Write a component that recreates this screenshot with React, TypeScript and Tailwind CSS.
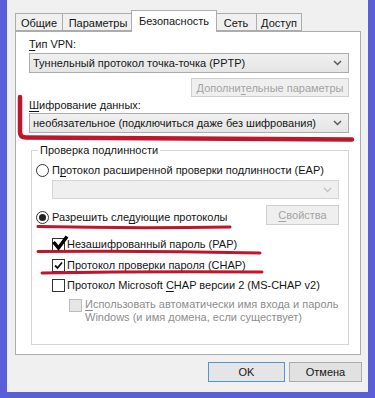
import React from "react";

const Ul = ({ children }: { children: React.ReactNode }) => (
  <span className="underline underline-offset-2 decoration-1">{children}</span>
);

const Chevron = ({ light }: { light?: boolean }) => (
  <svg width="9" height="6" viewBox="0 0 9 6">
    <path
      d="M1 1 L4.5 4.5 L8 1"
      fill="none"
      stroke={light ? "#c4c4c4" : "#5a5a5a"}
      strokeWidth="1.5"
    />
  </svg>
);

const Combo = ({ text, disabled }: { text?: string; disabled?: boolean }) => (
  <div
    className={
      disabled
        ? "flex items-center justify-between h-[19px] border border-[#d5d5d5] bg-[#efefef] pl-[3px] pr-[6px]"
        : "flex items-center justify-between h-[20px] border border-[#acacac] bg-gradient-to-b from-[#f0f0f0] to-[#e5e5e5] pl-[3px] pr-[6px]"
    }
  >
    <span>{text}</span>
    <Chevron light={disabled} />
  </div>
);

const Radio = ({ on }: { on?: boolean }) => (
  <span className="flex items-center justify-center w-[13px] h-[13px] rounded-full border border-[#333] bg-white shrink-0">
    {on && <span className="w-[7px] h-[7px] rounded-full bg-[#222]" />}
  </span>
);

const Check = ({ on, disabled }: { on?: boolean; disabled?: boolean }) => (
  <span
    className={
      disabled
        ? "flex w-[13px] h-[13px] border border-[#bcbcbc] bg-[#e6e6e6] shrink-0"
        : "flex items-center justify-center w-[13px] h-[13px] border border-[#333] bg-white shrink-0"
    }
  >
    {on && (
      <svg width="11" height="11" viewBox="0 0 11 11">
        <path d="M2 5.5 L4.5 8 L9 2.5" fill="none" stroke="#111" strokeWidth="1.8" />
      </svg>
    )}
  </span>
);

const tabs = [
  { label: "Общие", w: "w-[47px]" },
  { label: "Параметры", w: "w-[71px]" },
  { label: "Безопасность", w: "w-[86px]", active: true },
  { label: "Сеть", w: "w-[41px]" },
  { label: "Доступ", w: "w-[46px]" },
];

export default function App() {
  return (
    <div className="relative w-[375px] h-[398px] overflow-hidden bg-[#5a5ed8] px-[7px] pb-[6px] font-['Liberation_Sans',Arial,sans-serif] text-[11px] leading-[16px] text-[#151515] whitespace-nowrap">
      <div className="h-full bg-[#f0f0f0] flex flex-col">
        {/* tabs */}
        <div className="flex items-end h-[21px] mt-[10px] ml-[8px]">
          {tabs.map((t) =>
            t.active ? (
              <div
                key={t.label}
                className={`${t.w} relative z-10 -mb-px -mx-[2px] h-[22px] border border-b-0 border-[#acacac] bg-white pt-[2px] text-center`}
              >
                {t.label}
              </div>
            ) : (
              <div
                key={t.label}
                className={`${t.w} h-[18px] border border-r-0 last:border-r border-[#acacac] bg-[#f0f0f0] pt-[1px] text-center`}
              >
                {t.label}
              </div>
            )
          )}
        </div>

        {/* panel */}
        <div className="ml-[8px] w-[346px] h-[324px] border border-[#acacac] bg-white pl-[13px] pr-[11px] flex flex-col">
          <div className="mt-[4px]">
            <Ul>Т</Ul>ип VPN:
          </div>
          <div className="mt-[1px]">
            <Combo text="Туннельный протокол точка-точка (PPTP)" />
          </div>
          <div className="mt-[5px] self-end w-[158px] h-[19px] border border-[#cfcfcf] bg-[#efefef] text-[#a3a3a3] flex items-center justify-center">
            <span>
              Дополни<Ul>т</Ul>ельные параметры
            </span>
          </div>
          <div>
            <Ul>Ш</Ul>ифрование данных:
          </div>
          <Combo text="необязательное (подключиться даже без шифрования)" />

          <fieldset className="mt-[9px] ml-[2px] h-[203px] border border-[#d5d5d5] pl-[4px] pr-[9px]">
            <legend className="ml-[2px] px-[2px]">Проверка подлинности</legend>
            <div className="mt-[4px] flex items-center gap-[3px]">
              <Radio />
              <span>
                П<Ul>р</Ul>отокол расширенной проверки подлинности (EAP)
              </span>
            </div>
            <div className="mt-[2px] ml-[16px]">
              <Combo disabled />
            </div>
            <div className="mt-[6px] flex items-start justify-between">
              <div className="mt-[4px] flex items-center gap-[3px]">
                <Radio on />
                <span>
                  Разрешить сле<Ul>д</Ul>ующие протоколы
                </span>
              </div>
              <div className="w-[73px] h-[20px] border border-[#cfcfcf] bg-[#efefef] text-[#a3a3a3] flex items-center justify-center">
                <span>
                  <Ul>С</Ul>войства
                </span>
              </div>
            </div>
            <div className="ml-[16px] mt-[11px] flex items-center gap-[2px]">
              <Check />
              <span>
                <Ul>Н</Ul>езашифрованный пароль (PAP)
              </span>
            </div>
            <div className="ml-[16px] mt-[5px] flex items-center gap-[2px]">
              <Check on />
              <span>
                <Ul>П</Ul>ротокол проверки пароля (CHAP)
              </span>
            </div>
            <div className="ml-[16px] mt-[4px] flex items-center gap-[2px]">
              <Check />
              <span>
                Протокол Microsoft <Ul>C</Ul>HAP версии 2 (MS-CHAP v2)
              </span>
            </div>
            <div className="ml-[33px] mt-[5px] flex items-start gap-[3px] text-[#8d8d8d] leading-[13px]">
              <span className="mt-[1px]">
                <Check disabled />
              </span>
              <span>
                <Ul>И</Ul>спользовать автоматически имя входа и пароль
                <br />
                Windows (и имя домена, если существует)
              </span>
            </div>
          </fieldset>
        </div>

        {/* buttons */}
        <div className="mt-[7px] flex justify-end gap-[4px] pr-[6px]">
          <div className="w-[77px] h-[20px] border border-[#4f94d4] bg-[#e5e5e5] flex items-center justify-center">
            OK
          </div>
          <div className="w-[73px] h-[20px] border border-[#acacac] bg-[#e1e1e1] flex items-center justify-center">
            Отмена
          </div>
        </div>
      </div>

      {/* hand-drawn annotations */}
      <svg
        className="absolute left-0 top-0 pointer-events-none"
        width="375"
        height="398"
        viewBox="0 0 375 398"
      >
        <g fill="none" stroke="#c0162c" strokeLinecap="round">
          <path d="M20 97 L20 132 Q20 137.5 26 137.5 L352 139.5" strokeWidth="4.5" />
          <path d="M38 226.5 Q130 228.5 230 227" strokeWidth="3" />
          <path d="M38 251.5 Q150 250.5 260 253" strokeWidth="3" />
          <path d="M42 273 Q150 271 262 272" strokeWidth="3" />
        </g>
        <path
          d="M53.5 242 L58.5 248 L67 236.5"
          fill="none"
          stroke="#000"
          strokeWidth="3.5"
        />
      </svg>
    </div>
  );
}
